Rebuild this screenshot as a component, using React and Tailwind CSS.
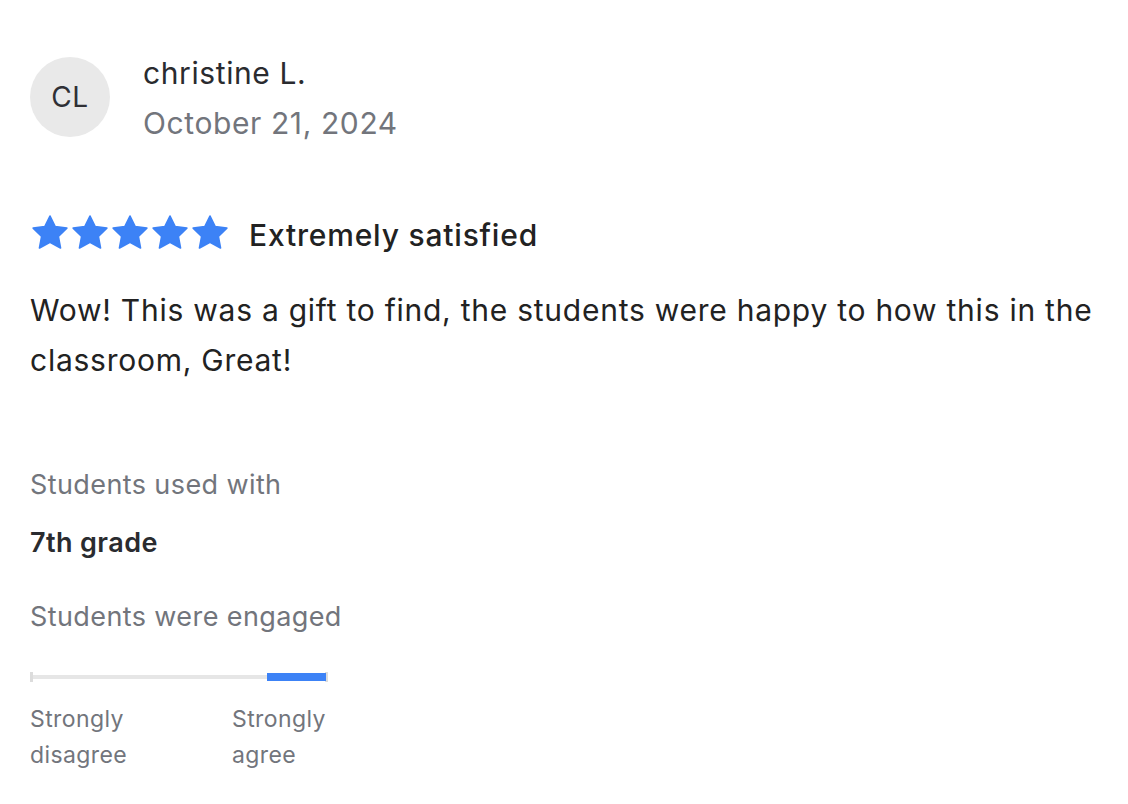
import React from "react";

const Star = () => (
  <svg viewBox="0 0 24 24" className="w-[40px] h-[40px]" fill="#3c82f6">
    <path d="M12 1.8l3.1 6.4 7 .9-5.1 4.9 1.3 7L12 17.6 5.7 21l1.3-7L1.9 9.1l7-.9z" strokeLinejoin="round" stroke="#3c82f6" strokeWidth="1" />
  </svg>
);

const App = () => {
  return (
    <div
      className="bg-white w-[1128px] h-[804px] px-[30px] pt-[57px] text-[#222]"
      style={{ fontFamily: "Inter, 'Noto Sans', sans-serif" }}
    >
      {/* HEADER */}
      <div className="flex items-start gap-[33px]">
        <div className="w-[80px] h-[80px] rounded-full bg-[#e9e9e9] flex items-center justify-center text-[28px] tracking-[0.5px] text-[#2f3035]">
          CL
        </div>
        <div className="flex flex-col -mt-[2px]">
          <span className="text-[30px] leading-[36px] tracking-[0.6px] text-[#2a2b2f]">christine L.</span>
          <span className="text-[30px] leading-[36px] tracking-[0.6px] mt-[14px] text-[#72757c]">October 21, 2024</span>
        </div>
      </div>

      {/* RATING */}
      <div className="flex items-center mt-[72px] gap-[19px] h-[40px]">
        <div className="flex">
          <Star />
          <Star />
          <Star />
          <Star />
          <Star />
        </div>
        <span className="text-[30px] leading-[40px] font-medium tracking-[0.8px] text-[#222] mt-[3px]">Extremely satisfied</span>
      </div>

      <p className="text-[30px] leading-[50px] tracking-[0.75px] mt-[32px] text-[#222]">
        Wow! This was a gift to find, the students were happy to how this in the classroom, Great!
      </p>

      {/* DETAILS */}
      <div className="mt-[82px] flex flex-col">
        <span className="text-[27px] leading-[36px] tracking-[0.4px] text-[#72757c]">Students used with</span>
        <span className="text-[27px] leading-[36px] tracking-[0.4px] font-semibold text-[#2a2b2f] mt-[22px]">7th grade</span>
        <span className="text-[27px] leading-[36px] tracking-[0.4px] text-[#72757c] mt-[38px]">Students were engaged</span>

        <div className="relative w-[298px] h-[12px] mt-[36px] flex items-center">
          <div className="w-full h-[4px] bg-[#e6e6e6]" />
          <div className="absolute left-0 w-[3px] h-[10px] bg-[#dcdcdc]" />
          <div className="absolute right-0 w-[3px] h-[10px] bg-[#dcdcdc]" />
          <div className="absolute right-[2px] w-[59px] h-[8px] bg-[#3c82f6]" />
        </div>

        <div className="flex mt-[18px] text-[23px] leading-[36px] tracking-[0.4px] text-[#72757c]">
          <span className="w-[202px]">Strongly<br />disagree</span>
          <span>Strongly<br />agree</span>
        </div>
      </div>
    </div>
  );
};

export default App;
